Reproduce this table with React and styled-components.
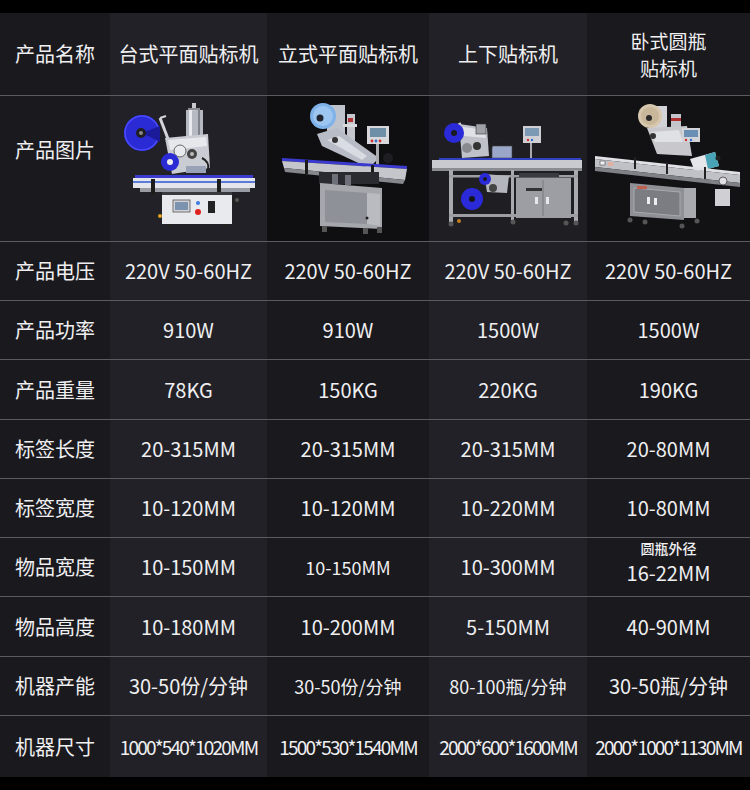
import React from "react";
import styled, { createGlobalStyle } from "styled-components";

const Global = createGlobalStyle`
  html, body { margin: 0; padding: 0; background: #000; }
  body { font-family: "Noto Sans CJK SC", "Noto Sans", sans-serif; }
`;

const Page = styled.div`
  width: 750px;
  height: 790px;
  background: #000;
  padding: 13px 0;
  box-sizing: border-box;
`;

const Table = styled.div`
  display: grid;
  grid-template-columns: 110px 157px 162px 158px 163px;
  grid-template-rows: 82px 146px 59px 59px 60px 59px 59px 59px 60px 59px 62px;
`;

const Cell = styled.div`
  display: flex;
  flex-direction: column;
  align-items: center;
  justify-content: center;
  box-sizing: border-box;
  background: ${(p) => (p.$alt ? "#222127" : "#1a191e")};
  border-top: ${(p) => (p.$first ? "none" : "1px solid #5c5b61")};
  color: #efeff1;
  font-size: ${(p) => p.$size || 20}px;
  letter-spacing: ${(p) => p.$ls || 0}px;
  line-height: 26px;
  text-align: center;
  white-space: nowrap;
  padding-bottom: ${(p) => p.$pb || 0}px;
`;

const ImageCell = styled(Cell)`
  background: ${(p) => p.$bg};
  padding: 0;
`;

const HeadLine = styled.span`
  font-size: 19px;
  line-height: 27.5px;
`;

const Note = styled.span`
  font-size: 14px;
  line-height: 20px;
  font-weight: 500;
`;

const Value = styled.span`
  line-height: 29px;
`;

const Machine1 = () => (
  <svg width="157" height="145" viewBox="0 0 157 145">
    <rect x="76" y="14" width="17" height="34" fill="#b6b9c1" />
    <rect x="79" y="14" width="3" height="34" fill="#e8eaf0" />
    <rect x="88" y="14" width="2" height="34" fill="#7f828b" />
    <rect x="82" y="7" width="4" height="8" fill="#c8c8cc" />
    <rect x="78" y="12" width="12" height="2" fill="#8a8a90" />
    <line x1="50" y1="22" x2="60" y2="48" stroke="#d4d4da" strokeWidth="3" />
    <line x1="50" y1="22" x2="56" y2="20" stroke="#d4d4da" strokeWidth="2" />
    <circle cx="32" cy="37" r="18" fill="#2b2bd6" />
    <circle cx="32" cy="37" r="17" fill="none" stroke="#4a4aff" strokeWidth="1.5" />
    <path d="M32 37 L50 30 L50 46 Z" fill="#1b1b9a" />
    <circle cx="31" cy="37" r="5" fill="#1e1e24" />
    <circle cx="31" cy="37" r="2" fill="#888" />
    <polygon points="55,42 98,38 100,72 62,78" fill="#c9ccd3" />
    <polygon points="58,44 96,41 97,50 60,54" fill="#e6e8ec" />
    <circle cx="70" cy="55" r="6" fill="#e9eaee" stroke="#666" />
    <circle cx="82" cy="58" r="5" fill="#444" />
    <circle cx="82" cy="58" r="2" fill="#bbb" />
    <path d="M92 62 Q100 66 98 74" stroke="#222" strokeWidth="2" fill="none" />
    <circle cx="60" cy="66" r="9" fill="#2b2bd6" />
    <circle cx="60" cy="66" r="3" fill="#eee" />
    <rect x="76" y="70" width="20" height="7" fill="#9aa2b8" />
    <rect x="25" y="79" width="118" height="3" fill="#3b3bd0" />
    <rect x="23" y="82" width="122" height="10" fill="#e4e6ec" />
    <rect x="23" y="85" width="122" height="2" fill="#5a7bd8" />
    <rect x="30" y="92" width="110" height="4" fill="#9a9ca4" />
    <rect x="41" y="83" width="4" height="14" fill="#1c1c1c" />
    <rect x="107" y="83" width="4" height="14" fill="#1c1c1c" />
    <circle cx="43" cy="97" r="2" fill="#1c1c1c" />
    <circle cx="109" cy="97" r="2" fill="#1c1c1c" />
    <rect x="52" y="96" width="70" height="32" fill="#e9eaee" />
    <rect x="52" y="96" width="70" height="3" fill="#3a3a3e" />
    <rect x="63" y="104" width="17" height="12" fill="#d4d4d8" stroke="#555" strokeWidth="0.8" />
    <rect x="65" y="106" width="13" height="8" fill="#7c93b0" />
    <circle cx="88" cy="107" r="2" fill="#3a7be0" />
    <circle cx="88" cy="116" r="3" fill="#e02020" />
    <rect x="98" y="105" width="7" height="12" fill="#222" />
    <rect x="57" y="128" width="6" height="4" fill="#222" />
    <rect x="112" y="128" width="6" height="4" fill="#222" />
    <circle cx="50" cy="120" r="2" fill="#e0a020" />
    <circle cx="127" cy="104" r="5" fill="#222" />
    <circle cx="127" cy="104" r="2" fill="#555" />
  </svg>
);

const Machine2 = () => (
  <svg width="162" height="145" viewBox="0 0 162 145">
    <rect x="60" y="9" width="18" height="30" fill="#bfc3cc" />
    <circle cx="56" cy="20" r="13" fill="#7fb2e8" />
    <circle cx="56" cy="20" r="10" fill="#9cc5f0" />
    <circle cx="53" cy="22" r="3.5" fill="#1f2430" />
    <rect x="80" y="18" width="8" height="44" fill="#c4c7ce" />
    <rect x="81" y="22" width="5" height="4" fill="#b03030" />
    <rect x="76" y="28" width="14" height="3" fill="#d8dade" />
    <polygon points="50,38 70,32 112,62 102,72 55,50" fill="#b8bcc6" />
    <polygon points="60,44 72,40 100,60 95,64" fill="#d9dce2" />
    <circle cx="68" cy="44" r="3" fill="#333" />
    <rect x="109" y="47" width="3" height="23" fill="#a9abb1" />
    <rect x="100" y="30" width="22" height="18" fill="#d8d8dc" />
    <rect x="103" y="32" width="16" height="9" fill="#6f8fa8" />
    <circle cx="105" cy="45" r="1.4" fill="#d03030" />
    <circle cx="109" cy="45" r="1.4" fill="#2f6fd0" />
    <circle cx="113" cy="45" r="1.4" fill="#d03030" />
    <circle cx="121" cy="62" r="5" fill="#1e1e22" />
    <polygon points="15,62 140,70 140,73 15,65" fill="#3a3ad0" />
    <polygon points="15,65 140,73 138,84 17,72" fill="#c4c6cc" />
    <polygon points="17,72 138,84 136,88 18,76" fill="#85878d" />
    <rect x="38" y="64" width="3" height="14" fill="#1a1a1a" />
    <rect x="104" y="69" width="3" height="14" fill="#1a1a1a" />
    <rect x="52" y="76" width="60" height="12" fill="#2a2b30" />
    <rect x="65" y="78" width="6" height="10" fill="#6d7078" />
    <rect x="78" y="79" width="6" height="10" fill="#6d7078" />
    <polygon points="53,87 115,92 115,133 53,130" fill="#a5a7ad" />
    <polygon points="58,94 100,97 100,128 58,126" fill="#8f9198" />
    <polygon points="100,97 113,98 113,130 100,128" fill="#b9bbc1" />
    <rect x="55" y="130" width="5" height="6" fill="#555" />
    <rect x="96" y="132" width="5" height="6" fill="#555" />
    <rect x="110" y="131" width="5" height="6" fill="#555" />
    <circle cx="100" cy="122" r="1.5" fill="#222" />
  </svg>
);

const Machine3 = () => (
  <svg width="158" height="145" viewBox="0 0 158 145">
    <line x1="30" y1="27" x2="38" y2="42" stroke="#d0d2d8" strokeWidth="3" />
    <polygon points="30,28 58,32 60,60 33,62" fill="#c0c2ca" />
    <polygon points="34,31 56,34 57,42 35,40" fill="#dfe1e6" />
    <rect x="47" y="28" width="10" height="10" fill="#9ea1a8" stroke="#333" strokeWidth="0.6" />
    <circle cx="25" cy="37" r="10" fill="#2a2ad8" />
    <circle cx="25" cy="37" r="3" fill="#1a1a22" />
    <circle cx="38" cy="52" r="5" fill="#888a90" />
    <circle cx="48" cy="50" r="4" fill="#333" />
    <rect x="63" y="50" width="20" height="12" fill="#9aa7c8" stroke="#444" strokeWidth="0.6" />
    <path d="M62 52 Q66 42 74 44" stroke="#222" strokeWidth="1.5" fill="none" />
    <rect x="101" y="45" width="2" height="18" fill="#a8aab0" />
    <rect x="94" y="30" width="18" height="17" fill="#d0d0d4" />
    <rect x="96" y="32" width="14" height="8" fill="#7d9ab5" />
    <circle cx="99" cy="44" r="1.2" fill="#d03030" />
    <circle cx="103" cy="44" r="1.2" fill="#2f6fd0" />
    <rect x="10" y="62" width="142" height="2.5" fill="#3040c0" />
    <rect x="3" y="64" width="150" height="8" fill="#c8cad0" />
    <rect x="3" y="72" width="150" height="3" fill="#8a8c92" />
    <rect x="20" y="74" width="4" height="52" fill="#a8aab0" />
    <rect x="145" y="74" width="4" height="52" fill="#a8aab0" />
    <rect x="82" y="74" width="3" height="50" fill="#a8aab0" />
    <rect x="20" y="79" width="129" height="2.5" fill="#9c9ea4" />
    <rect x="20" y="118" width="129" height="3" fill="#9c9ea4" />
    <rect x="87" y="82" width="55" height="40" fill="#9c9ea4" />
    <line x1="114" y1="84" x2="114" y2="120" stroke="#77797f" strokeWidth="1" />
    <rect x="97" y="92" width="16" height="3" fill="#333" />
    <rect x="106" y="101" width="3" height="7" fill="#e8e8ea" />
    <rect x="117" y="101" width="3" height="7" fill="#e8e8ea" />
    <rect x="90" y="77" width="40" height="4" fill="#3a3b40" />
    <polygon points="55,78 80,80 78,97 58,96" fill="#b4b6bd" />
    <circle cx="56" cy="83" r="6" fill="#2a2ad8" />
    <circle cx="56" cy="83" r="2" fill="#1a1a22" />
    <circle cx="43" cy="103" r="11" fill="#2a2ad8" />
    <circle cx="43" cy="103" r="3" fill="#15151c" />
    <circle cx="64" cy="92" r="4" fill="#444" />
    <circle cx="22" cy="128" r="2.5" fill="#555" />
    <circle cx="30" cy="125" r="2" fill="#c08020" />
    <circle cx="137" cy="127" r="2.5" fill="#555" />
    <circle cx="147" cy="127" r="2.5" fill="#555" />
    <circle cx="84" cy="126" r="2.5" fill="#555" />
  </svg>
);

const Machine4 = () => (
  <svg width="163" height="145" viewBox="0 0 163 145">
    <rect x="84" y="18" width="10" height="38" fill="#c3c5cb" />
    <rect x="84" y="22" width="10" height="3" fill="#b03030" />
    <polygon points="62,10 80,10 80,35 62,35" fill="#d2d3d6" />
    <circle cx="63" cy="20" r="12" fill="#d6c7ae" />
    <circle cx="63" cy="20" r="9" fill="#c9b799" />
    <circle cx="62" cy="22" r="3" fill="#2a2a2a" />
    <polygon points="60,32 100,30 105,60 70,58" fill="#c8c8cc" />
    <polygon points="64,36 92,34 96,46 68,46" fill="#e0e1e4" />
    <circle cx="66" cy="40" r="3" fill="#333" />
    <rect x="95" y="32" width="18" height="14" fill="#d4d4d8" />
    <rect x="97" y="34" width="14" height="7" fill="#6a8fb5" />
    <circle cx="99" cy="44" r="1.2" fill="#d03030" />
    <circle cx="104" cy="44" r="1.2" fill="#2f6fd0" />
    <polygon points="103,63 128,56 132,70 108,76" fill="#e4e6ea" />
    <polygon points="118,59 128,56 132,70 121,73" fill="#47a3b5" />
    <circle cx="131" cy="62" r="2.5" fill="#222" />
    <polygon points="8,60 153,76 153,79 8,63" fill="#e0e1e5" />
    <polygon points="8,63 153,79 153,87 8,71" fill="#bfc1c7" />
    <polygon points="8,71 153,87 153,91 8,75" fill="#7f8187" />
    <rect x="13" y="65" width="5" height="4" fill="#f0f0f2" stroke="#333" strokeWidth="0.5" />
    <rect x="21" y="66" width="5" height="4" fill="#e0b0a0" />
    <rect x="47" y="61" width="2" height="12" fill="#222" />
    <rect x="79" y="66" width="2" height="12" fill="#222" />
    <rect x="117" y="71" width="2" height="12" fill="#222" />
    <circle cx="136" cy="85" r="4" fill="#e0e0e4" stroke="#444" strokeWidth="0.8" />
    <rect x="128" y="93" width="15" height="17" fill="#d0d0d4" />
    <polygon points="43,87 97,92 97,124 43,120" fill="#8e9096" />
    <polygon points="47,92 93,96 93,120 47,116" fill="#7b7d83" stroke="#a8aab0" strokeWidth="1" />
    <rect x="60" y="101" width="3" height="7" fill="#ecedef" />
    <rect x="67" y="102" width="3" height="7" fill="#ecedef" />
    <rect x="50" y="90" width="10" height="3" fill="#c06050" />
    <rect x="97" y="92" width="12" height="30" fill="#a8aab0" />
    <circle cx="43" cy="124" r="2.5" fill="#555" />
    <circle cx="58" cy="126" r="2.5" fill="#555" />
    <circle cx="95" cy="130" r="2.5" fill="#555" />
    <circle cx="110" cy="125" r="2.5" fill="#555" />
  </svg>
);

const names = ["台式平面贴标机", "立式平面贴标机", "上下贴标机", ["卧式圆瓶", "贴标机"]];
const images = [
  { C: Machine1, bg: "#222127" },
  { C: Machine2, bg: "#0f0f12" },
  { C: Machine3, bg: "#1f1e23" },
  { C: Machine4, bg: "#121215" },
];

const rows = [
  ["产品电压", ["220V 50-60HZ", "220V 50-60HZ", "220V 50-60HZ", "220V 50-60HZ"]],
  ["产品功率", ["910W", "910W", "1500W", "1500W"]],
  ["产品重量", ["78KG", "150KG", "220KG", "190KG"]],
  ["标签长度", ["20-315MM", "20-315MM", "20-315MM", "20-80MM"]],
  ["标签宽度", ["10-120MM", "10-120MM", "10-220MM", "10-80MM"]],
  ["物品宽度", ["10-150MM", { t: "10-150MM", s: 18 }, "10-300MM", { t: "16-22MM", note: "圆瓶外径" }]],
  ["物品高度", ["10-180MM", "10-200MM", "5-150MM", "40-90MM"]],
  ["机器产能", ["30-50份/分钟", { t: "30-50份/分钟", s: 18 }, { t: "80-100瓶/分钟", s: 18 }, "30-50瓶/分钟"]],
  ["机器尺寸", [
    { t: "1000*540*1020MM", s: 19, ls: -1.8 },
    { t: "1500*530*1540MM", s: 19, ls: -1.8 },
    { t: "2000*600*1600MM", s: 19, ls: -1.8 },
    { t: "2000*1000*1130MM", s: 19, ls: -1.8 },
  ]],
];

export default function App() {
  return (
    <>
      <Global />
      <Page>
        <Table>
          <Cell $first>产品名称</Cell>
          {names.map((n, i) => (
            <Cell key={i} $first $alt={i % 2 === 0}>
              {Array.isArray(n) ? n.map((l) => <HeadLine key={l}>{l}</HeadLine>) : n}
            </Cell>
          ))}
          <Cell $pb={38}>产品图片</Cell>
          {images.map(({ C, bg }, i) => (
            <ImageCell key={i} $bg={bg}>
              <C />
            </ImageCell>
          ))}
          {rows.map(([label, vals]) => (
            <React.Fragment key={label}>
              <Cell>{label}</Cell>
              {vals.map((v, i) => {
                const o = typeof v === "string" ? { t: v } : v;
                return (
                  <Cell key={i} $alt={i % 2 === 0} $size={o.s} $ls={o.ls} $pb={o.note ? 9 : 0}>
                    {o.note && <Note>{o.note}</Note>}
                    {o.note ? <Value>{o.t}</Value> : o.t}
                  </Cell>
                );
              })}
            </React.Fragment>
          ))}
        </Table>
      </Page>
    </>
  );
}
